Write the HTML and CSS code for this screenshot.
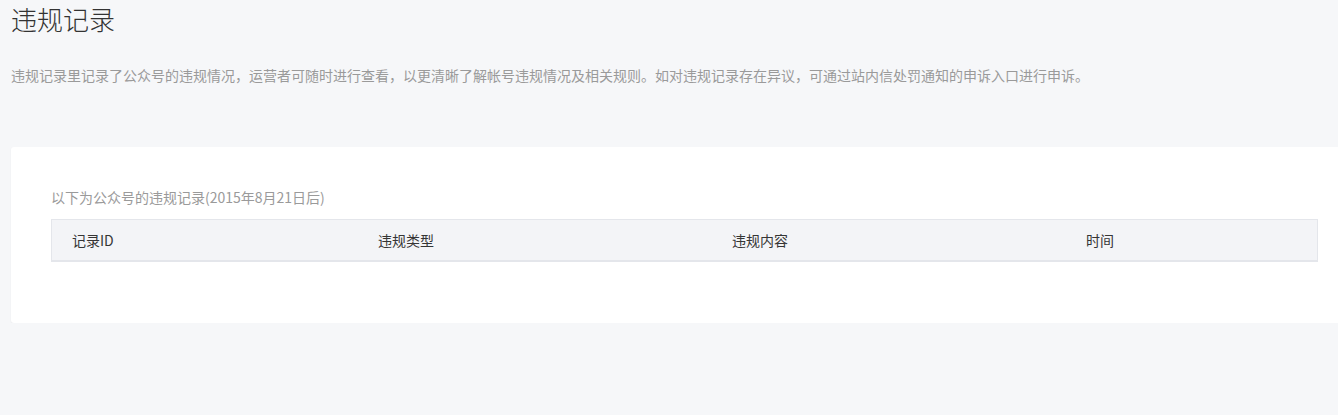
FILE: index.html
```html
<!DOCTYPE html>
<html lang="zh-CN">
<head>
<meta charset="utf-8">
<title>违规记录</title>
<link rel="stylesheet" href="styles.css">
</head>
<body>
<div class="page">
  <h1 class="title">违规记录</h1>
  <p class="desc">违规记录里记录了公众号的违规情况，运营者可随时进行查看，以更清晰了解帐号违规情况及相关规则。如对违规记录存在异议，可通过站内信处罚通知的申诉入口进行申诉。</p>
  <div class="card">
    <p class="sub">以下为公众号的违规记录(2015年8月21日后)</p>
    <div class="table">
      <div class="th">记录ID</div>
      <div class="th">违规类型</div>
      <div class="th">违规内容</div>
      <div class="th">时间</div>
    </div>
  </div>
</div>
</body>
</html>
```
FILE: styles.css
```css
html, body {
  margin: 0;
  padding: 0;
  background: #f6f7f9;
  overflow: hidden;
}
body {
  font-family: "Noto Sans CJK SC", "Noto Sans", sans-serif;
  color: #353535;
}
.page {
  padding: 0 0 0 11px;
  width: 1367px;
}
.title {
  margin: 0;
  padding-top: 2px;
  font-size: 26px;
  font-weight: 300;
  line-height: 34px;
  color: #333;
}
.desc {
  margin: 29px 0 0;
  font-size: 14px;
  line-height: 20px;
  color: #9a9a9a;
}
.card {
  margin-top: 62px;
  background: #fff;
  border-radius: 3px;
  box-shadow: 0 1px 2px rgba(0,0,0,0.06);
  padding: 36px 40px 61px;
}
.sub {
  margin: 0;
  font-size: 14px;
  line-height: 28px;
  color: #9a9a9a;
}
.table {
  margin-top: 8px;
  display: grid;
  grid-template-columns: 306px 354px 354px 251px;
  background: #f3f4f7;
  border: 1px solid #e4e6eb;
  border-bottom-width: 2px;
  width: 1265px;
}
.th {
  padding: 0 20px;
  font-size: 14px;
  line-height: 40px;
  color: #353535;
}
```
